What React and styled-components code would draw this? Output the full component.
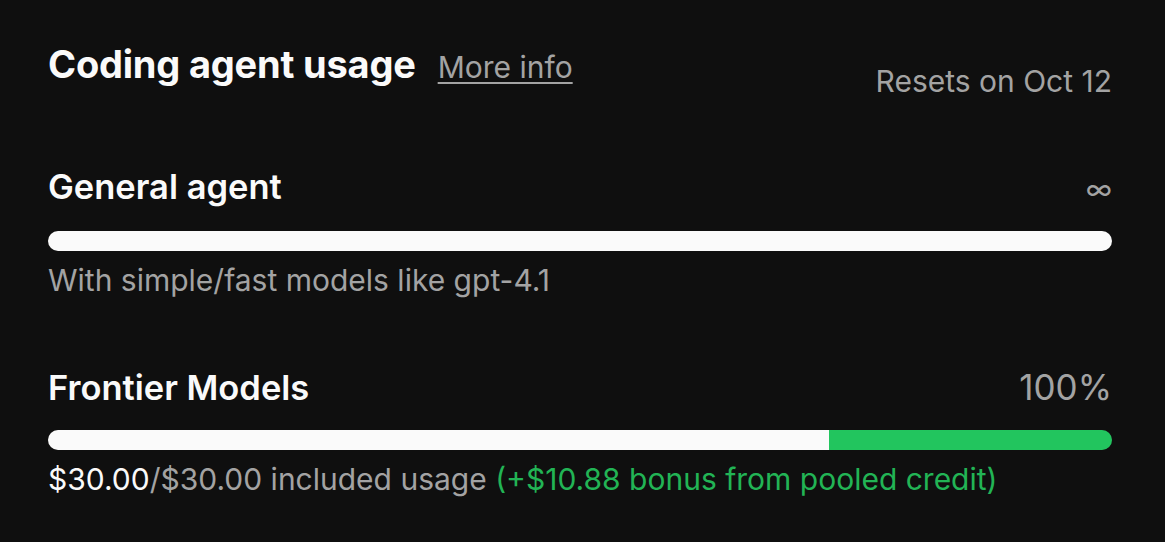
import React from "react";
import styled, { createGlobalStyle } from "styled-components";

const Global = createGlobalStyle`
  html, body { margin: 0; padding: 0; background: #0f0f0f; }
  body { font-family: Inter, "Noto Sans", sans-serif; -webkit-font-smoothing: antialiased; }
`;

const Page = styled.div`
  width: 1165px;
  height: 542px;
  box-sizing: border-box;
  padding: 41px 53px 0 48px;
  background: #0f0f0f;
  color: #fafafa;
  display: flex;
  flex-direction: column;
`;

const Header = styled.div`
  display: flex;
  justify-content: space-between;
  align-items: flex-start;
`;

const TitleGroup = styled.div`
  display: flex;
  align-items: baseline;
  gap: 22px;
`;

const Title = styled.h1`
  margin: 0;
  font-size: 38px;
  line-height: 46px;
  font-weight: 700;
  letter-spacing: -0.2px;
  color: #fafafa;
`;

const MoreInfo = styled.a`
  font-size: 30px;
  line-height: 36px;
  color: #a3a3a3;
  text-decoration: underline;
  text-underline-offset: 4px;
  text-decoration-thickness: 2px;
`;

const Resets = styled.div`
  margin-top: 22px;
  font-size: 30px;
  line-height: 36px;
  color: #a3a3a3;
`;

const Section = styled.div`
  display: flex;
  flex-direction: column;
  margin-top: ${(p) => p.$top}px;
`;

const SectionHead = styled.div`
  display: flex;
  justify-content: space-between;
  align-items: baseline;
`;

const SectionTitle = styled.div`
  font-size: 34.5px;
  line-height: 40px;
  font-weight: 600;
  color: #fafafa;
`;

const SectionValue = styled.div`
  font-size: ${(p) => p.$size}px;
  line-height: 40px;
  color: #a3a3a3;
`;

const Track = styled.div`
  margin-top: 22px;
  height: 20px;
  border-radius: 10px;
  overflow: hidden;
  display: flex;
  background: #262626;
`;

const Fill = styled.div`
  height: 100%;
  background: ${(p) => p.$color};
`;

const Note = styled.div`
  margin-top: 11px;
  font-size: 30px;
  line-height: 36px;
  color: #a3a3a3;
`;

const Strong = styled.span`
  color: #fafafa;
`;

const Bonus = styled.span`
  color: #22b455;
`;

export default function App() {
  return (
    <>
      <Global />
      <Page>
        <Header>
          <TitleGroup>
            <Title>Coding agent usage</Title>
            <MoreInfo href="#">More info</MoreInfo>
          </TitleGroup>
          <Resets>Resets on Oct 12</Resets>
        </Header>

        <Section $top={68}>
          <SectionHead>
            <SectionTitle>General agent</SectionTitle>
            <SectionValue $size={28}>∞</SectionValue>
          </SectionHead>
          <Track>
            <Fill $color="#fafafa" style={{ width: "100%" }} />
          </Track>
          <Note>With simple/fast models like gpt-4.1</Note>
        </Section>

        <Section $top={69}>
          <SectionHead>
            <SectionTitle>Frontier Models</SectionTitle>
            <SectionValue $size={35}>100%</SectionValue>
          </SectionHead>
          <Track>
            <Fill $color="#fafafa" style={{ width: `${(781 / 1064) * 100}%` }} />
            <Fill $color="#22c55e" style={{ flex: 1 }} />
          </Track>
          <Note>
            <Strong>$30.00</Strong>/$30.00 included usage{" "}
            <Bonus>(+$10.88 bonus from pooled credit)</Bonus>
          </Note>
        </Section>
      </Page>
    </>
  );
}
